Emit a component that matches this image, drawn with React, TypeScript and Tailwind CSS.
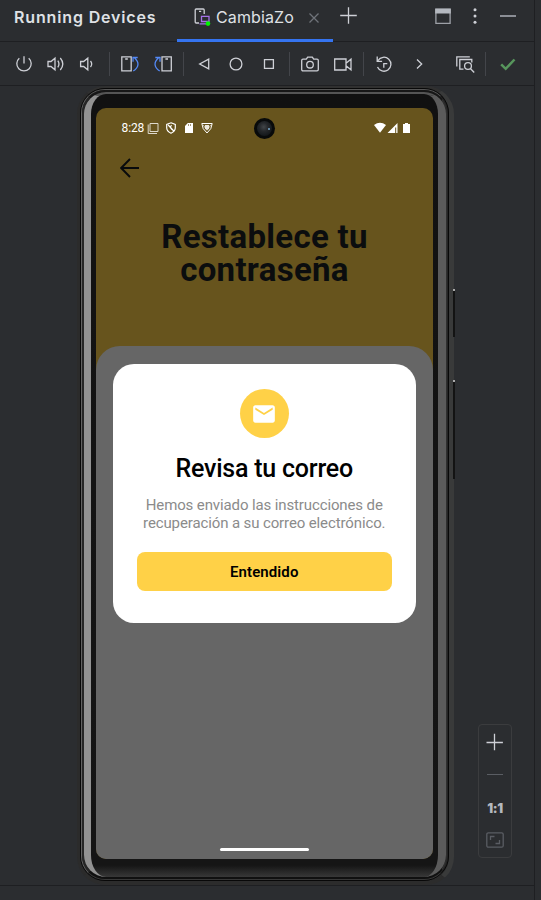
import React from "react";

type IconProps = { className?: string; children: React.ReactNode };

function Icon({ className = "", children }: IconProps) {
  return (
    <svg
      viewBox="0 0 20 20"
      className={`h-5 w-5 shrink-0 ${className}`}
      fill="none"
      stroke="#ced0d6"
      strokeWidth="1.3"
    >
      {children}
    </svg>
  );
}

function Separator({ className }: { className: string }) {
  return <div className={`h-6 w-px shrink-0 bg-[#43454a] ${className}`} />;
}

function Header() {
  return (
    <header className="flex h-[42px] border-b border-[#1e1f22]">
      <h1 className="w-[177px] shrink-0 whitespace-nowrap pl-[14px] pt-[5px] text-[16px] font-semibold leading-6 tracking-[0.85px] text-[#dfe1e5]">
        Running Devices
      </h1>
      <div className="flex h-[42px] w-[156px] shrink-0 border-b-[3px] border-[#3574f0] pl-[16px]">
        <Icon className="mt-[7px]">
          <path d="M6 16H3.200q-1 0-1-1V3q0-1 1-1h7q1 0 1 1v4M6 4.300h2.200" />
          <path d="M8.500 9.300h7.500v5.200H8.500zM6.500 16.800h8" stroke="#a571e6" />
          <circle cx="15" cy="16.600" r="2.300" fill="#00f300" stroke="none" />
        </Icon>
        <span className="ml-[3px] w-[80px] pt-[5px] text-[16px] leading-6 tracking-[0.120px] text-[#dfe1e5]">
          CambiaZo
        </span>
        <Icon className="ml-[8px] mt-[8px]">
          <path d="M5.500 5.500l9 9m0-9l-9 9" stroke="#6f737a" />
        </Icon>
      </div>
      <Icon className="ml-[5px] mt-[5px]">
        <path d="M10.500 2.200v16.600M2.200 10.500h16.600" />
      </Icon>
      <Icon className="ml-[75px] mt-[6px]">
        <path d="M2.900 3.500h14.200v13.800H2.900z" stroke="#9da0a6" />
        <path d="M2.200 2.500h15.600v5H2.200z" fill="#b4b8bf" stroke="none" />
      </Icon>
      <Icon className="ml-[12px] mt-[6px]">
        <g fill="#ced0d6" stroke="none">
          <circle cx="10" cy="3.800" r="1.500" />
          <circle cx="10" cy="10" r="1.500" />
          <circle cx="10" cy="16.200" r="1.500" />
        </g>
      </Icon>
      <Icon className="ml-[13px] mt-[6px]">
        <path d="M2 10h16" stroke="#9da0a8" strokeWidth="1.700" />
      </Icon>
    </header>
  );
}

function Toolbar() {
  return (
    <div className="flex h-[44px] items-center border-b border-[#1e1f22] pl-[14px]">
      <Icon>
        <path d="M5.300 4.300a7.200 7.200 0 1 0 9.400 0M10 2.300v7.200" />
      </Icon>
      <Icon className="ml-[12px]">
        <path d="M2 7.500h3l4-3.300v11.600L5 12.500H2zM11.800 6.700q2.300 3.300 0 6.600M14.300 4q5 6 0 12" />
      </Icon>
      <Icon className="ml-[11px]">
        <path d="M3.600 7.500h3l4.200-3.300v11.600l-4.200-3.300h-3zM13.500 7q2.400 3 0 6" />
      </Icon>
      <Separator className="ml-[12px]" />
      <Icon className="ml-[10px]">
        <path d="M1.800 2.900h9.400v14H1.800zM5.200 5h2.600" />
        <path d="M13.300 17Q22 11 14.500 3.800M13 7.800V3.500h4.700" stroke="#548af7" />
      </Icon>
      <Icon className="ml-[13px]">
        <path d="M9 2.900h9.300v14H9zM12.400 5H15" />
        <path d="M6.700 17Q-2 11 5.500 3.800M7 7.800V3.500H2.300" stroke="#548af7" />
      </Icon>
      <Separator className="ml-[10px]" />
      <Icon className="ml-[10px]">
        <path d="M14.700 5.200v9.600L5.700 10z" />
      </Icon>
      <Icon className="ml-[12px]">
        <circle cx="10" cy="10" r="5.900" />
      </Icon>
      <Icon className="ml-[13px]">
        <path d="M5.500 5.600h8.900v8.800H5.500z" />
      </Icon>
      <Separator className="ml-[10px]" />
      <Icon className="ml-[10px]">
        <path d="M3 5.200h3.300l1.400-2.100h4.600l1.400 2.100H17q1.300 0 1.300 1.300v9q0 1.300-1.300 1.300H3q-1.300 0-1.300-1.300v-9Q1.700 5.200 3 5.200z" />
        <circle cx="10" cy="10.700" r="3.300" />
      </Icon>
      <Icon className="ml-[13px]">
        <path d="M1.700 5h11.300v11H1.700zM13 9.200l5-4v10.600l-5-4" />
      </Icon>
      <Separator className="ml-[10px]" />
      <Icon className="ml-[10px]">
        <path d="M4 6.500a7 7 0 1 1-.5 6.500M3.200 2.500v4.800h4.900M9.800 13.700V9.700h3.500" />
      </Icon>
      <Icon className="ml-[15px]">
        <path d="M8 5.500l4.700 4.500L8 14.500" />
      </Icon>
      <Icon className="ml-[26px]">
        <path d="M1.800 12.500V2.800h13M8.500 15.200H4.800V5.500h12v3" />
        <circle cx="13" cy="12" r="3.400" />
        <path d="M15.400 14.500l3.800 4" />
      </Icon>
      <Separator className="ml-[10px]" />
      <Icon className="ml-[12px]">
        <path d="M3.200 10.300l4.500 4.500 8.800-9.300" stroke="#57965c" strokeWidth="2.500" />
      </Icon>
    </div>
  );
}

function StatusBar() {
  return (
    <div className="flex h-[40px] items-center pl-[25.500px] text-white">
      <span className="w-[24px] text-[12px] tracking-[-0.100px]">8:28</span>
      <svg viewBox="0 0 12 12" className="ml-[1.500px] h-3 w-3" fill="none" stroke="#ded9cc">
        <path d="M3 1.500h8v8H3zM1.200 2.500v9H10" />
      </svg>
      <svg viewBox="0 0 12 12" className="ml-[6px] h-3 w-3" fill="none" stroke="white" strokeWidth="1.200">
        <path d="M6 .8l4.300 1.600v3.300q0 3.500-4.300 5.500-4.300-2-4.300-5.500V2.400zM3.200 3l6 6.500M6.500 3q-2 2.500.5 4.500" />
      </svg>
      <svg viewBox="0 0 12 12" className="ml-[5.500px] h-3 w-3" fill="white">
        <path d="M4.800 1H10v10H2V4z" />
        <path d="M5.500 2v2M7.500 2v2" stroke="#67541d" strokeWidth=".6" />
      </svg>
      <svg viewBox="0 0 12 12" className="ml-[6px] h-3 w-3" fill="none" stroke="white">
        <path d="M.8 1.500h10.400Q11 7 6 11 1 7 .8 1.500z" />
        <path d="M4 3h4v3.500L6 8.500l-2-2z" fill="#ebe7dc" stroke="none" />
        <path d="M2.300 3l2 3M9.700 3l-2 3" strokeWidth=".6" />
      </svg>
      <div className="ml-[41.500px] flex size-[21px] items-center justify-center rounded-full bg-[#080a0a]">
        <div className="flex size-[15px] items-center justify-end rounded-full bg-[radial-gradient(circle_at_45%_40%,#424649,#25282b_35%,#15191c_70%)] pr-[2px] pt-[2px]">
          <div className="size-[2px] rounded-full bg-[#78a8cb]" />
        </div>
      </div>
      <svg viewBox="0 0 37 12" className="ml-[99px] h-3 w-[37px]" fill="white">
        <path d="M0 3Q6-1.500 12 3L6 10.800z" />
        <path d="M13.500 11L23.500 1v10h-1.300V5.500h-1V11z" />
        <path d="M29 2h2V1h3v1h2v9h-7z" />
      </svg>
    </div>
  );
}

function Dialog() {
  return (
    <section className="flex h-[259px] flex-col items-center rounded-[21px] bg-white px-[24.500px] pt-[25px]">
      <div className="flex size-[49px] items-center justify-center rounded-full bg-[#ffd147]">
        <svg viewBox="0 0 24 24" className="size-[26px]" fill="white">
          <path d="M20 4H4c-1.100 0-2 .9-2 2v12c0 1.100.9 2 2 2h16c1.100 0 2-.9 2-2V6c0-1.100-.9-2-2-2zm0 4l-8 5-8-5V6l8 5 8-5v2z" />
        </svg>
      </div>
      <h3 className="mt-[16px] whitespace-nowrap text-[25px] font-medium leading-[30px] tracking-[-0.220px] text-black">
        Revisa tu correo
      </h3>
      <p className="mt-[13px] whitespace-nowrap text-center text-[15px] leading-[17.500px] tracking-[-0.120px] text-[#8b8b8b]">
        Hemos enviado las instrucciones de
        <br />
        recuperación a su correo electrónico.
      </p>
      <button className="mt-[20px] h-[39px] w-full rounded-[8px] bg-[#ffd147] pt-px text-[15px] font-semibold tracking-[0.100px] text-black">
        Entendido
      </button>
    </section>
  );
}

function Screen() {
  return (
    <div className="flex h-full flex-col overflow-hidden rounded-[10px] bg-[#67541d] font-[Roboto,sans-serif]">
      <StatusBar />
      <svg viewBox="0 0 20 20" className="ml-[24px] mt-[10px] size-5 shrink-0" fill="none" stroke="#080a0c" strokeWidth="1.900">
        <path d="M19 10H1.500M10 1L1.200 10l8.800 9" />
      </svg>
      <h2 className="mt-[42px] whitespace-nowrap text-center text-[33px] font-bold leading-[33px] tracking-[0.300px] text-[#0b0d0e]">
        Restablece tu
        <br />
        contraseña
      </h2>
      <div className="mt-[60px] flex flex-1 flex-col rounded-t-[24px] bg-[#666] pl-[16.500px] pr-[17px] pt-[18px]">
        <Dialog />
        <div className="mx-auto mb-[8px] mt-auto h-[3px] w-[89px] rounded-sm bg-white" />
      </div>
    </div>
  );
}

function Phone() {
  return (
    <div className="relative ml-[77px] h-[799px] w-[377px] shrink-0">
      <div className="relative h-full rounded-[28px] border-b-[4px] border-l-[3px] border-r-[5px] border-t-[2px] border-b-[#2c2c2c] border-l-[#2b2b2b] border-r-[#393a3a] border-t-[#303030] bg-[#2c2c2c]">
        <div className="h-full rounded-[25px] border border-[#080808] bg-[#111]">
          <div className="h-full rounded-[24px] border border-b-[#383838] border-l-[#626262] border-r-[#252525] border-t-[#555] bg-[#222]">
            <div className="h-full rounded-[23px] border-b-2 border-l-2 border-r border-t-2 border-b-[#101010] border-l-[#262626] border-r-[#303030] border-t-[#171717] bg-[#171717]">
              <div className="h-full rounded-[22px] border-b-0 border-l-[7px] border-r-[8px] border-t-[2px] border-l-[#929292] border-r-[#5b5b5b] border-t-[#555] bg-[linear-gradient(to_bottom,#111_0,#151515_98.500%,#383838_100%)]">
                <div className="h-full px-[5px] pb-[18px] pt-[14px]">
                  <Screen />
                </div>
              </div>
            </div>
          </div>
        </div>
      </div>
      <div className="absolute -right-px top-[203px] h-[48px] w-[2px] border-t-2 border-t-[#aaa] bg-[#131313]" />
      <div className="absolute -right-px top-[294px] h-[99px] w-[2px] border-t-2 border-t-[#aaa] bg-[#131313]" />
    </div>
  );
}

function ZoomControls() {
  return (
    <div className="ml-[24px] mt-[638px] flex h-[134px] w-[34px] flex-col items-center rounded-[4px] border border-[#3b3c3e]">
      <Icon className="mt-[7px]">
        <path d="M9.500 1.800v16.400M1.500 10.500h16.400" />
      </Icon>
      <div className="mt-[22px] h-px w-4 bg-[#5a5d63]" />
      <span className="mt-[23px] text-[13px] font-black leading-[20px] tracking-[-0.300px] text-[#b4b8bf]">
        1:1
      </span>
      <Icon className="mt-[12px]">
        <g stroke="#5a5d63">
          <rect x="1.800" y="2.800" width="16.400" height="14.400" rx="1.500" />
          <path d="M5.500 10V6.500h4M14.500 10v3.500h-4" />
        </g>
      </Icon>
    </div>
  );
}

export default function App() {
  return (
    <main className="flex h-[900px] w-[541px] overflow-hidden bg-[#2b2d30] font-[Inter,sans-serif]">
      <div className="flex w-[535px] shrink-0 flex-col border-r border-[#1e1f22]">
        <Header />
        <Toolbar />
        <div className="flex h-[800px] items-start border-b border-[#1e1f22]">
          <Phone />
          <ZoomControls />
        </div>
      </div>
    </main>
  );
}
